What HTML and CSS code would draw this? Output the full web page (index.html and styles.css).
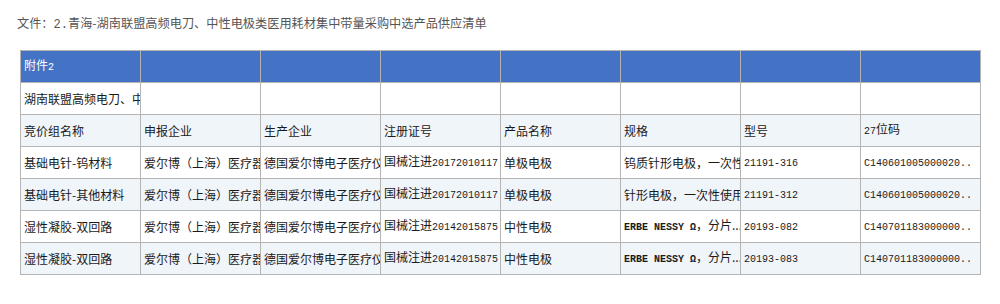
FILE: index.html
```html
<!DOCTYPE html>
<html lang="zh">
<head>
<meta charset="utf-8">
<link rel="stylesheet" href="styles.css">
</head>
<body>
<div class="title">文件：<span class="tnum">2.</span>青海-湖南联盟高频电刀、中性电极类医用耗材集中带量采购中选产品供应清单</div>
<table class="grid">
  <colgroup>
    <col class="c"><col class="c"><col class="c"><col class="c"><col class="c"><col class="c"><col class="c"><col class="c">
  </colgroup>
  <tr class="head">
    <td><div class="cell">附件<span class="num">2</span></div></td><td></td><td></td><td></td><td></td><td></td><td></td><td></td>
  </tr>
  <tr class="white">
    <td><div class="cell">湖南联盟高频电刀、中性电极类医用耗材</div></td><td></td><td></td><td></td><td></td><td></td><td></td><td></td>
  </tr>
  <tr class="alt">
    <td><div class="cell">竞价组名称</div></td>
    <td><div class="cell">申报企业</div></td>
    <td><div class="cell">生产企业</div></td>
    <td><div class="cell">注册证号</div></td>
    <td><div class="cell">产品名称</div></td>
    <td><div class="cell">规格</div></td>
    <td><div class="cell">型号</div></td>
    <td><div class="cell"><span class="num">27</span>位码</div></td>
  </tr>
  <tr class="white">
    <td><div class="cell">基础电针-钨材料</div></td>
    <td><div class="cell">爱尔博（上海）医疗器械有限公司</div></td>
    <td><div class="cell">德国爱尔博电子医疗仪器公司</div></td>
    <td><div class="cell">国械注进<span class="num">20172010117</span></div></td>
    <td><div class="cell">单极电极</div></td>
    <td><div class="cell">钨质针形电极，一次性使用</div></td>
    <td><div class="cell"><span class="num">21191-316</span></div></td>
    <td><div class="cell"><span class="num">C140601005000020..</span></div></td>
  </tr>
  <tr class="alt">
    <td><div class="cell">基础电针-其他材料</div></td>
    <td><div class="cell">爱尔博（上海）医疗器械有限公司</div></td>
    <td><div class="cell">德国爱尔博电子医疗仪器公司</div></td>
    <td><div class="cell">国械注进<span class="num">20172010117</span></div></td>
    <td><div class="cell">单极电极</div></td>
    <td><div class="cell">针形电极，一次性使用</div></td>
    <td><div class="cell"><span class="num">21191-312</span></div></td>
    <td><div class="cell"><span class="num">C140601005000020..</span></div></td>
  </tr>
  <tr class="white">
    <td><div class="cell">湿性凝胶-双回路</div></td>
    <td><div class="cell">爱尔博（上海）医疗器械有限公司</div></td>
    <td><div class="cell">德国爱尔博电子医疗仪器公司</div></td>
    <td><div class="cell">国械注进<span class="num">20142015875</span></div></td>
    <td><div class="cell">中性电极</div></td>
    <td><div class="cell"><span class="num b">ERBE NESSY Ω</span>，分片...</div></td>
    <td><div class="cell"><span class="num">20193-082</span></div></td>
    <td><div class="cell"><span class="num">C140701183000000..</span></div></td>
  </tr>
  <tr class="alt">
    <td><div class="cell">湿性凝胶-双回路</div></td>
    <td><div class="cell">爱尔博（上海）医疗器械有限公司</div></td>
    <td><div class="cell">德国爱尔博电子医疗仪器公司</div></td>
    <td><div class="cell">国械注进<span class="num">20142015875</span></div></td>
    <td><div class="cell">中性电极</div></td>
    <td><div class="cell"><span class="num b">ERBE NESSY Ω</span>，分片...</div></td>
    <td><div class="cell"><span class="num">20193-083</span></div></td>
    <td><div class="cell"><span class="num">C140701183000000..</span></div></td>
  </tr>
</table>
</body>
</html>
```
FILE: styles.css
```css
html, body {
  margin: 0;
  padding: 0;
  background: #ffffff;
}
body {
  font-family: "Noto Sans CJK SC", "Noto Sans", sans-serif;
  color: #222;
}
.title {
  padding: 14px 0 0 17px;
  height: 50px;
  box-sizing: border-box;
  font-size: 12.2px;
  line-height: 18px;
  color: #555;
}
.tnum {
  font-family: "Liberation Mono", monospace;
  font-size: 12px;
}
.grid {
  margin-left: 20px;
  border-collapse: collapse;
  table-layout: fixed;
  width: 961px;
}
.c {
  width: 120px;
}
.grid td {
  border: 1px solid #b4b4b4;
  height: 32px;
  padding: 0 0 0 3px;
  box-sizing: border-box;
  vertical-align: middle;
  overflow: hidden;
}
.cell {
  white-space: nowrap;
  overflow: hidden;
  font-size: 12px;
  line-height: 16px;
  color: #1a1a1a;
}
.head td {
  background: #4472c4;
}
.head .cell {
  color: #ffffff;
}
.white td {
  background: #ffffff;
}
.alt td {
  background: #f0f5fa;
}
.num {
  font-family: "Liberation Mono", monospace;
  font-size: 10px;
  letter-spacing: 0px;
}
.num.b {
  font-weight: bold;
}
```
